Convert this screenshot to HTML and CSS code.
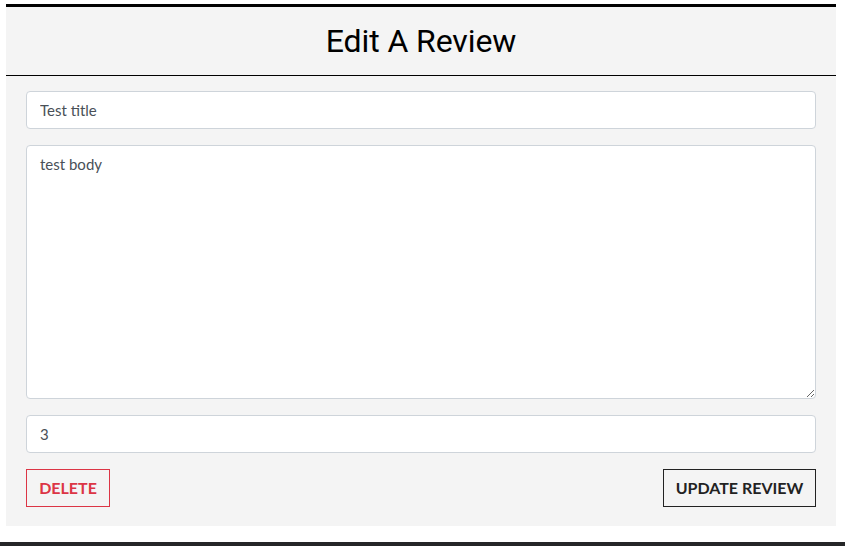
FILE: index.html
```html
<!DOCTYPE html>
<html>
<head>
<meta charset="utf-8">
<link rel="stylesheet" href="styles.css">
</head>
<body>
<div class="card">
  <div class="card-header"><h1 class="title">Edit A Review</h1></div>
  <form class="form">
    <input class="field" type="text" value="Test title">
    <textarea class="field area">test body</textarea>
    <input class="field" type="text" value="3">
    <div class="actions">
      <button type="button" class="btn btn-delete">DELETE</button>
      <button type="button" class="btn btn-update">UPDATE REVIEW</button>
    </div>
  </form>
</div>
<div class="footer-bar"></div>
</body>
</html>
```
FILE: styles.css
```css
html, body { margin: 0; padding: 0; background: #fff; }
body { font-family: Lato, "Liberation Sans", sans-serif; height: 546px; overflow: hidden; }
.card {
  margin: 4px 0 0 6px;
  width: 830px;
  border-top: 3px solid #000;
  background: #f4f4f4;
}
.card-header {
  height: 68px;
  border-bottom: 1px solid #000;
  display: flex;
  align-items: center;
  justify-content: center;
}
.title {
  margin: 0;
  font-family: Roboto, "Liberation Sans", sans-serif;
  font-weight: 400;
  font-size: 32px;
  color: #000;
  letter-spacing: -0.1px;
}
.form {
  padding: 15px 20px 19px;
  display: flex;
  flex-direction: column;
  gap: 16px;
}
.field {
  box-sizing: border-box;
  width: 790px;
  height: 38px;
  margin: 0;
  border: 1px solid #ced4da;
  border-radius: 4px;
  background: #fff;
  padding: 0 13px;
  font-family: Lato, sans-serif;
  font-weight: 400;
  font-size: 15px;
  color: #495057;
  outline: none;
}
.area {
  height: 254px;
  padding: 9px 13px;
  resize: vertical;
  display: block;
}
.actions {
  display: flex;
  justify-content: space-between;
}
.btn {
  box-sizing: border-box;
  height: 38px;
  background: transparent;
  font-family: Lato, sans-serif;
  font-weight: 700;
  font-size: 16px;
  padding: 0 0 2px;
  cursor: pointer;
}
.btn-delete {
  width: 84px;
  border: 1px solid #dc3545;
  color: #dc3545;
}
.btn-update {
  width: 153px;
  border: 1px solid #222;
  color: #222;
}
.footer-bar {
  margin-top: 16px;
  height: 10px;
  background: #252628;
}
```
